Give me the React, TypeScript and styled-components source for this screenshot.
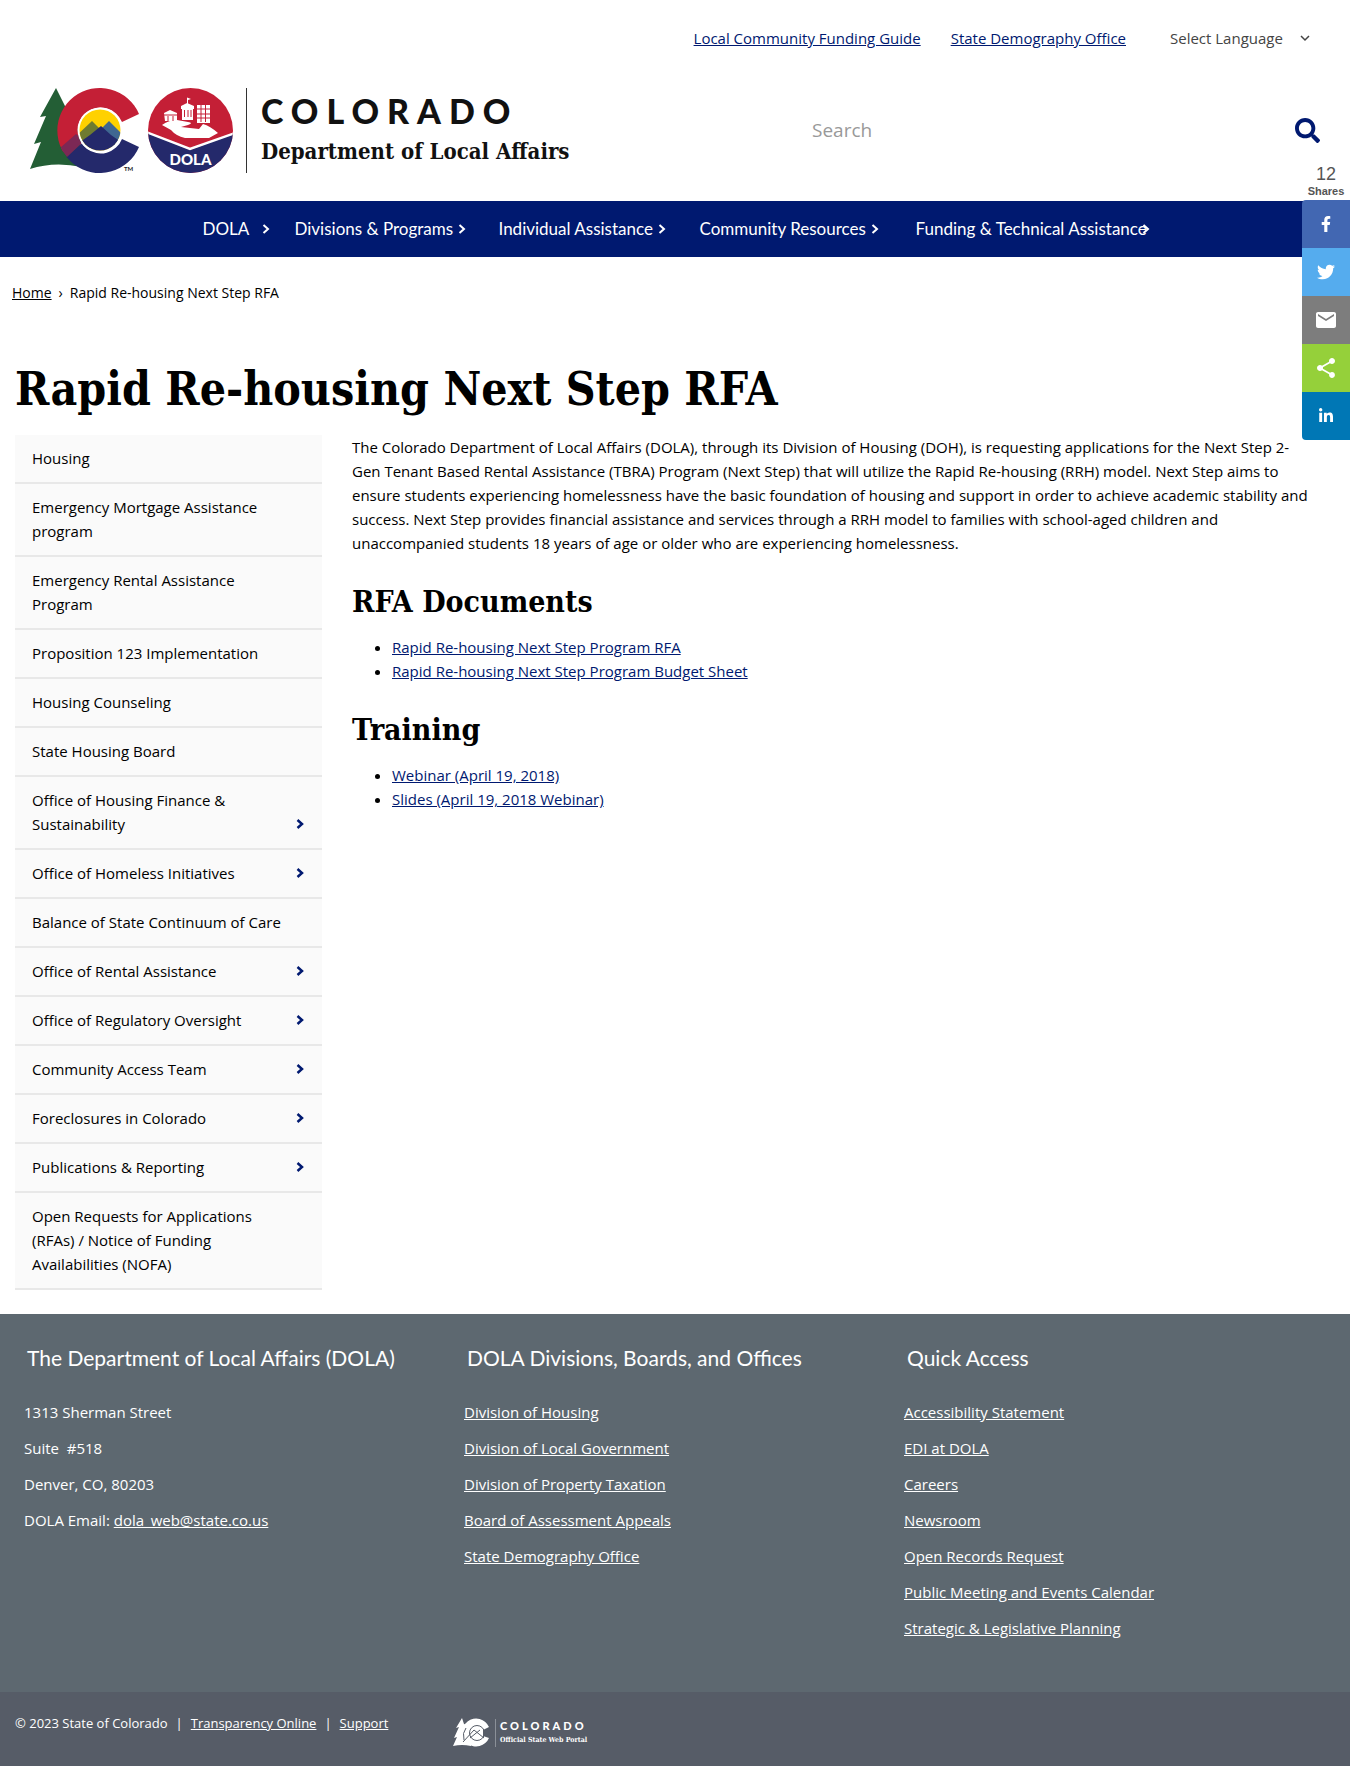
import React from "react";
import styled, { createGlobalStyle } from "styled-components";
import { FaFacebookF, FaTwitter, FaLinkedinIn, FaSearch } from "react-icons/fa";
import { MdEmail, MdShare } from "react-icons/md";

const sans = `"Open Sans", "Noto Sans", sans-serif`;
const display = `Lato, "Open Sans", sans-serif`;
const slab = `"DejaVu Serif Condensed", "DejaVu Serif", serif`;
const navy = "#001970";

const GlobalStyle = createGlobalStyle`
  *, *::before, *::after { box-sizing: border-box; }
  body {
    margin: 0;
    background: #fff;
    color: #000;
    font: 15px/24px ${sans};
  }
  ul { margin: 0; padding: 0; list-style: none; }
  a { color: inherit; }
  button, input, select { font: inherit; }
`;

const Page = styled.div`
  position: relative;
`;

const UtilityBar = styled.div`
  display: flex;
  justify-content: flex-end;
  align-items: center;
  gap: 30px;
  height: 76px;
  padding-right: 40px;
`;

const UtilityLink = styled.a`
  color: ${navy};
`;

const LanguagePicker = styled.label`
  display: flex;
  align-items: center;
  margin-left: 14px;
  color: #444;
`;

const LanguageSelect = styled.select`
  appearance: none;
  width: 130px;
  padding: 0;
  border: 0;
  background: none;
  color: inherit;
`;

const Header = styled.header`
  display: flex;
  justify-content: space-between;
  align-items: center;
  height: 125px;
  padding: 0 30px 17px;
`;

const Brand = styled.a`
  display: flex;
  align-items: center;
  color: #111;
  text-decoration: none;
`;

const BrandText = styled.span`
  display: flex;
  flex-direction: column;
  justify-content: center;
  gap: 10px;
  height: 85px;
  margin-left: 12px;
  padding-left: 14px;
  border-left: 1px solid #333;
`;

const BrandState = styled.span`
  font: 900 34px/32px ${display};
  letter-spacing: 8px;
`;

const BrandAgency = styled.span`
  font: 700 22px/28px ${slab};
`;

const SearchForm = styled.form`
  display: flex;
  align-items: center;
  width: 40%;
`;

const SearchInput = styled.input`
  flex: 1;
  min-width: 0;
  height: 40px;
  padding: 0 8px;
  border: 0;
  background: none;
  font-size: 19px;
  &::placeholder { color: #999; }
`;

const SearchButton = styled.button`
  display: flex;
  padding: 0;
  border: 0;
  background: none;
  color: ${navy};
`;

const NavBar = styled.nav`
  display: flex;
  justify-content: center;
  height: 56px;
  background: ${navy};
`;

const NavList = styled.ul`
  display: grid;
  grid-template-columns: 92px 204px 201px 216px 232px;
  align-items: center;
`;

const NavButton = styled.button`
  display: flex;
  align-items: center;
  gap: 5px;
  padding: 0;
  border: 0;
  background: none;
  color: #fff;
  font: 17px/24px ${display};
  white-space: nowrap;
`;

const NavLabel = styled.span<{ $tight?: boolean }>`
  min-width: 54px;
  margin-right: ${(p) => (p.$tight ? "-10px" : "0")};
  text-align: left;
`;

const Breadcrumb = styled.nav`
  display: flex;
  gap: 7px;
  padding: 24px 12px 0;
  font-size: 14px;
`;

const Title = styled.h1`
  margin: 56px 15px 18px;
  font: 700 46px/56px ${slab};
`;

const Columns = styled.div`
  display: flex;
  gap: 30px;
  padding: 0 15px 24px;
`;

const SideNav = styled.nav`
  flex: 0 0 307px;
  background: #fafafa;
`;

const SideLink = styled.a`
  display: flex;
  align-items: flex-end;
  gap: 8px;
  padding: 11px 17px 12px;
  border-bottom: 2px solid #e8e8e8;
  text-decoration: none;
`;

const SideLabel = styled.span`
  flex: 1;
`;

const ChevronSlot = styled.span`
  display: flex;
  align-items: center;
  width: 9px;
  height: 24px;
  color: ${navy};
`;

const Main = styled.main`
  flex: 1;
  min-width: 0;
  padding-right: 23px;
`;

const Paragraph = styled.p`
  margin: 0;
`;

const Heading = styled.h2`
  margin: 27px 0 13px;
  font: 700 30px/40px ${slab};
`;

const DocList = styled.ul`
  padding-left: 40px;
  list-style: disc;
  a { color: ${navy}; }
`;

const Footer = styled.footer`
  background: #5d6870;
  color: #fff;
`;

const FooterGrid = styled.div`
  display: grid;
  grid-template-columns: repeat(3, 1fr);
  min-height: 378px;
  padding: 28px 6px 30px 24px;
`;

const FooterTitle = styled.h3`
  margin: 0 0 26px 3px;
  font: 400 21px/32px ${display};
`;

const FooterList = styled.ul`
  display: flex;
  flex-direction: column;
  gap: 12px;
  white-space: pre;
`;

const Legal = styled.div`
  display: flex;
  height: 74px;
  padding: 19px 15px;
  background: #565c67;
  font-size: 13px;
`;

const LegalText = styled.div`
  display: flex;
  flex: 0 0 438px;
  gap: 8px;
`;

const Portal = styled.a`
  display: flex;
  align-items: center;
  height: 44px;
  text-decoration: none;
`;

const PortalText = styled.span`
  display: flex;
  flex-direction: column;
  margin-left: 5px;
  padding-left: 4px;
  border-left: 1px solid #8b9098;
`;

const PortalState = styled.span`
  font: 900 11px/14px ${display};
  letter-spacing: 3px;
`;

const PortalNote = styled.span`
  font: 700 7px/14px ${slab};
`;

const ShareRail = styled.aside`
  position: absolute;
  top: 164px;
  right: 0;
  width: 48px;
`;

const ShareCount = styled.div`
  display: flex;
  flex-direction: column;
  height: 36px;
  align-items: center;
  color: #555;
  font: 700 11px/14px "Liberation Sans", Arial, sans-serif;
`;

const ShareNumber = styled.span`
  font-size: 18px;
  font-weight: 400;
  line-height: 20px;
`;

const ShareButtons = styled.div`
  overflow: hidden;
  border-radius: 4px 0 0 4px;
`;

const ShareButton = styled.button<{ $color: string }>`
  display: flex;
  align-items: center;
  justify-content: center;
  width: 48px;
  height: 48px;
  padding: 0;
  border: 0;
  background: ${(p) => p.$color};
  color: #fff;
`;

const Chevron = ({ weight = 2 }: { weight?: number }) => (
  <svg width="8" height="10" viewBox="0 0 8 10" fill="none" stroke="currentColor" strokeWidth={weight} aria-hidden="true">
    <path d="M1.5 1 6 5 1.5 9" />
  </svg>
);

const StateLogo = () => (
  <svg width="204" height="87" viewBox="0 0 204 87" role="img" aria-label="Colorado DOLA">
    <defs>
      <clipPath id="sky"><circle cx="70" cy="43" r="20.5" /></clipPath>
      <clipPath id="ring"><path d="M109 27A42.5 42.5 0 1 0 109 60L92 52A23 23 0 1 1 92 35Z" /></clipPath>
      <clipPath id="seal"><circle cx="160.5" cy="43.5" r="42.5" /></clipPath>
    </defs>
    <path d="M26 1 10 30 16 29 4 57 11 55 0 82Q24 74 52 80L50 43 40 29 34 17Z" fill="#235e35" />
    <g clipPath="url(#ring)">
      <path d="M20-2H112V50H50L28 70H20Z" fill="#c41f36" />
      <path d="M51 57 35 71 50 88H112V50H70Z" fill="#24296b" />
      <path d="M30 61 46 47 54 54 37 70Z" fill="#7c2855" />
    </g>
    <circle cx="70" cy="43" r="22.5" fill="#fff" />
    <g clipPath="url(#sky)">
      <path d="M49 20H92V64H49Z" fill="#ffd100" />
      <path d="M45 50 62 34 72 44 60 62Z" fill="#6f7b31" />
      <path d="M64 49 79 34 96 51 82 60Z" fill="#3f6791" />
      <path d="M46 58 60 48 71 39 81 48 94 57V66H46Z" fill="#24296b" />
    </g>
    <text x="94" y="84" fontSize="6" fontFamily="Lato, sans-serif" fontWeight="700" fill="#222">TM</text>
    <g clipPath="url(#seal)">
      <path d="M118 0H203V87H118Z" fill="#c41f36" />
      <path d="M116 45 160 63 205 46V87H116Z" fill="#24296b" />
      <path d="M116 45 160 62 205 46" fill="none" stroke="#fff" strokeWidth="2.5" />
    </g>
    <g fill="#fff">
      <path d="M132 38Q139 33 147 33L158 35Q164 36 158 38L151 40 169 42 173 37Q180 39 188 46L179 51H155Q146 49 141 43Z" />
      <path d="M134 26 140 23 147 26V34H135Z" />
      <path d="M151 19 157 16 164 19V22H163V33H152V22H151ZM157 10.500 161 12 158 13V17H157Z" />
      <path d="M167 18H180V36H167Z" />
    </g>
    <path d="M171 18V35M175.5 18V35M167 22H180M167 27H180M167 31H180M154.5 23V30M158 23V30M161 23V30M138 29V34M143 29V34M134 28H147" stroke="#c41f36" strokeWidth="1" />
    <text x="160.500" y="78" textAnchor="middle" fontSize="15" fontFamily="Lato, sans-serif" fontWeight="900" fill="#fff">DOLA</text>
  </svg>
);

const PortalLogo = () => (
  <svg width="37" height="30" viewBox="0 0 37 30" fill="none" aria-hidden="true">
    <path d="M9 0 3 10 6 9 1 20 4 19 0 28Q9 26 18 28L17 8 11 6Z" fill="#fff" />
    <path d="M36 9A14 14 0 1 0 36 20L30 18V12Z" fill="#fff" />
    <circle cx="24" cy="15" r="7.5" stroke="#565c67" />
    <path d="M10 24 21 12 31 20M17 20 27 12M13 10Q9 15 11 22" stroke="#565c67" />
  </svg>
);

const navItems = ["DOLA", "Divisions & Programs", "Individual Assistance", "Community Resources", "Funding & Technical Assistance"];

const sideItems: { label: string; more?: boolean }[] = [
  { label: "Housing" },
  { label: "Emergency Mortgage Assistance program" },
  { label: "Emergency Rental Assistance Program" },
  { label: "Proposition 123 Implementation" },
  { label: "Housing Counseling" },
  { label: "State Housing Board" },
  { label: "Office of Housing Finance & Sustainability", more: true },
  { label: "Office of Homeless Initiatives", more: true },
  { label: "Balance of State Continuum of Care" },
  { label: "Office of Rental Assistance", more: true },
  { label: "Office of Regulatory Oversight", more: true },
  { label: "Community Access Team", more: true },
  { label: "Foreclosures in Colorado", more: true },
  { label: "Publications & Reporting", more: true },
  { label: "Open Requests for Applications (RFAs) / Notice of Funding Availabilities (NOFA)" },
];

const documents = ["Rapid Re-housing Next Step Program RFA", "Rapid Re-housing Next Step Program Budget Sheet"];
const training = ["Webinar (April 19, 2018)", "Slides (April 19, 2018 Webinar)"];
const divisions = ["Division of Housing", "Division of Local Government", "Division of Property Taxation", "Board of Assessment Appeals", "State Demography Office"];
const quickAccess = ["Accessibility Statement", "EDI at DOLA", "Careers", "Newsroom", "Open Records Request", "Public Meeting and Events Calendar", "Strategic & Legislative Planning"];

const Links = ({ items }: { items: string[] }) => (
  <>
    {items.map((item) => (
      <li key={item}><a href="#">{item}</a></li>
    ))}
  </>
);

export default function App() {
  return (
    <Page>
      <GlobalStyle />
      <UtilityBar>
        <UtilityLink href="#">Local Community Funding Guide</UtilityLink>
        <UtilityLink href="#">State Demography Office</UtilityLink>
        <LanguagePicker>
          <LanguageSelect aria-label="Select Language">
            <option>Select Language</option>
          </LanguageSelect>
          <svg width="10" height="7" viewBox="0 0 10 7" fill="none" stroke="currentColor" strokeWidth="1.5" aria-hidden="true">
            <path d="M1 1 5 5 9 1" />
          </svg>
        </LanguagePicker>
      </UtilityBar>
      <Header>
        <Brand href="#">
          <StateLogo />
          <BrandText>
            <BrandState>COLORADO</BrandState>
            <BrandAgency>Department of Local Affairs</BrandAgency>
          </BrandText>
        </Brand>
        <SearchForm role="search">
          <SearchInput type="search" placeholder="Search" aria-label="Search" />
          <SearchButton type="button" aria-label="Search">
            <FaSearch size={25} />
          </SearchButton>
        </SearchForm>
      </Header>
      <NavBar aria-label="Main">
        <NavList>
          {navItems.map((label, i) => (
            <li key={label}>
              <NavButton type="button">
                <NavLabel $tight={i === navItems.length - 1}>{label}</NavLabel>
                <Chevron />
              </NavButton>
            </li>
          ))}
        </NavList>
      </NavBar>
      <Breadcrumb aria-label="Breadcrumb">
        <a href="#">Home</a>
        <span>›</span>
        <span>Rapid Re-housing Next Step RFA</span>
      </Breadcrumb>
      <Title>Rapid Re-housing Next Step RFA</Title>
      <Columns>
        <SideNav aria-label="Housing">
          {sideItems.map(({ label, more }) => (
            <SideLink href="#" key={label}>
              <SideLabel>{label}</SideLabel>
              <ChevronSlot>{more && <Chevron weight={2.5} />}</ChevronSlot>
            </SideLink>
          ))}
        </SideNav>
        <Main>
          <Paragraph>
            The Colorado Department of Local Affairs (DOLA), through its Division of Housing (DOH), is requesting
            applications for the Next Step 2-<wbr />Gen Tenant Based Rental Assistance (TBRA) Program (Next Step) that will
            utilize the Rapid Re-housing (RRH) model. Next Step aims to ensure students experiencing homelessness have
            the basic foundation of housing and support in order to achieve academic stability and success. Next Step
            provides financial assistance and services through a RRH model to families with school-aged children and
            unaccompanied students 18 years of age or older who are experiencing homelessness.
          </Paragraph>
          <Heading>RFA Documents</Heading>
          <DocList><Links items={documents} /></DocList>
          <Heading>Training</Heading>
          <DocList><Links items={training} /></DocList>
        </Main>
      </Columns>
      <Footer>
        <FooterGrid>
          <section>
            <FooterTitle>The Department of Local Affairs (DOLA)</FooterTitle>
            <FooterList>
              <li>1313 Sherman Street</li>
              <li>{"Suite  #518"}</li>
              <li>Denver, CO, 80203</li>
              <li>DOLA Email: <a href="#">dola_web@state.co.us</a></li>
            </FooterList>
          </section>
          <section>
            <FooterTitle>DOLA Divisions, Boards, and Offices</FooterTitle>
            <FooterList><Links items={divisions} /></FooterList>
          </section>
          <section>
            <FooterTitle>Quick Access</FooterTitle>
            <FooterList><Links items={quickAccess} /></FooterList>
          </section>
        </FooterGrid>
        <Legal>
          <LegalText>
            <span>© 2023 State of Colorado</span>
            <span>|</span>
            <a href="#">Transparency Online</a>
            <span>|</span>
            <a href="#">Support</a>
          </LegalText>
          <Portal href="#">
            <PortalLogo />
            <PortalText>
              <PortalState>COLORADO</PortalState>
              <PortalNote>Official State Web Portal</PortalNote>
            </PortalText>
          </Portal>
        </Legal>
      </Footer>
      <ShareRail aria-label="Share">
        <ShareCount>
          <ShareNumber>12</ShareNumber>
          <span>Shares</span>
        </ShareCount>
        <ShareButtons>
          <ShareButton $color="#4267b2" aria-label="Facebook"><FaFacebookF size={16} /></ShareButton>
          <ShareButton $color="#55acee" aria-label="Twitter"><FaTwitter size={18} /></ShareButton>
          <ShareButton $color="#7d7d7d" aria-label="Email"><MdEmail size={24} /></ShareButton>
          <ShareButton $color="#95d03a" aria-label="ShareThis"><MdShare size={24} /></ShareButton>
          <ShareButton $color="#0077b5" aria-label="LinkedIn"><FaLinkedinIn size={16} /></ShareButton>
        </ShareButtons>
      </ShareRail>
    </Page>
  );
}
